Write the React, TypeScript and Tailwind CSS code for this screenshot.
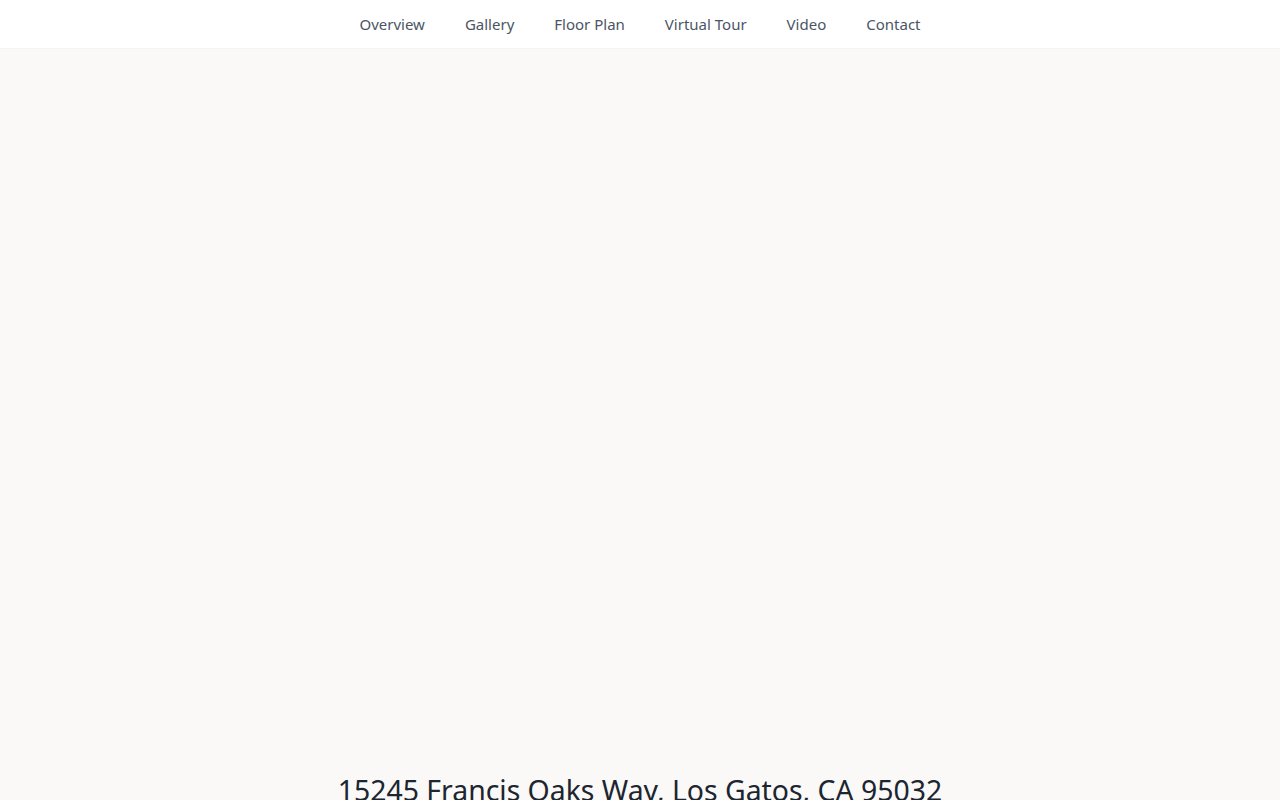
const navItems = ["Overview", "Gallery", "Floor Plan", "Virtual Tour", "Video", "Contact"];

export default function App() {
  return (
    <div className="min-h-screen bg-[#faf9f7] text-gray-900" style={{ fontFamily: '"Noto Sans", "Open Sans", sans-serif' }}>
      {/* Nav */}
      <nav className="h-[49px] bg-white border-b border-gray-100 flex items-center justify-center">
        <ul className="flex items-center gap-10">
          {navItems.map((item) => (
            <li key={item}>
              <a href="#" className="text-[15px] text-gray-600 hover:text-gray-900">
                {item}
              </a>
            </li>
          ))}
        </ul>
      </nav>

      {/* Hero */}
      <section className="h-[703px] bg-[#faf9f7]" />

      {/* Address */}
      <section className="pt-5 px-6 text-center">
        <h1 className="text-[28.4px] leading-9 text-[#1c2530]">15245 Francis Oaks Way, Los Gatos, CA 95032</h1>
      </section>
    </div>
  );
}
